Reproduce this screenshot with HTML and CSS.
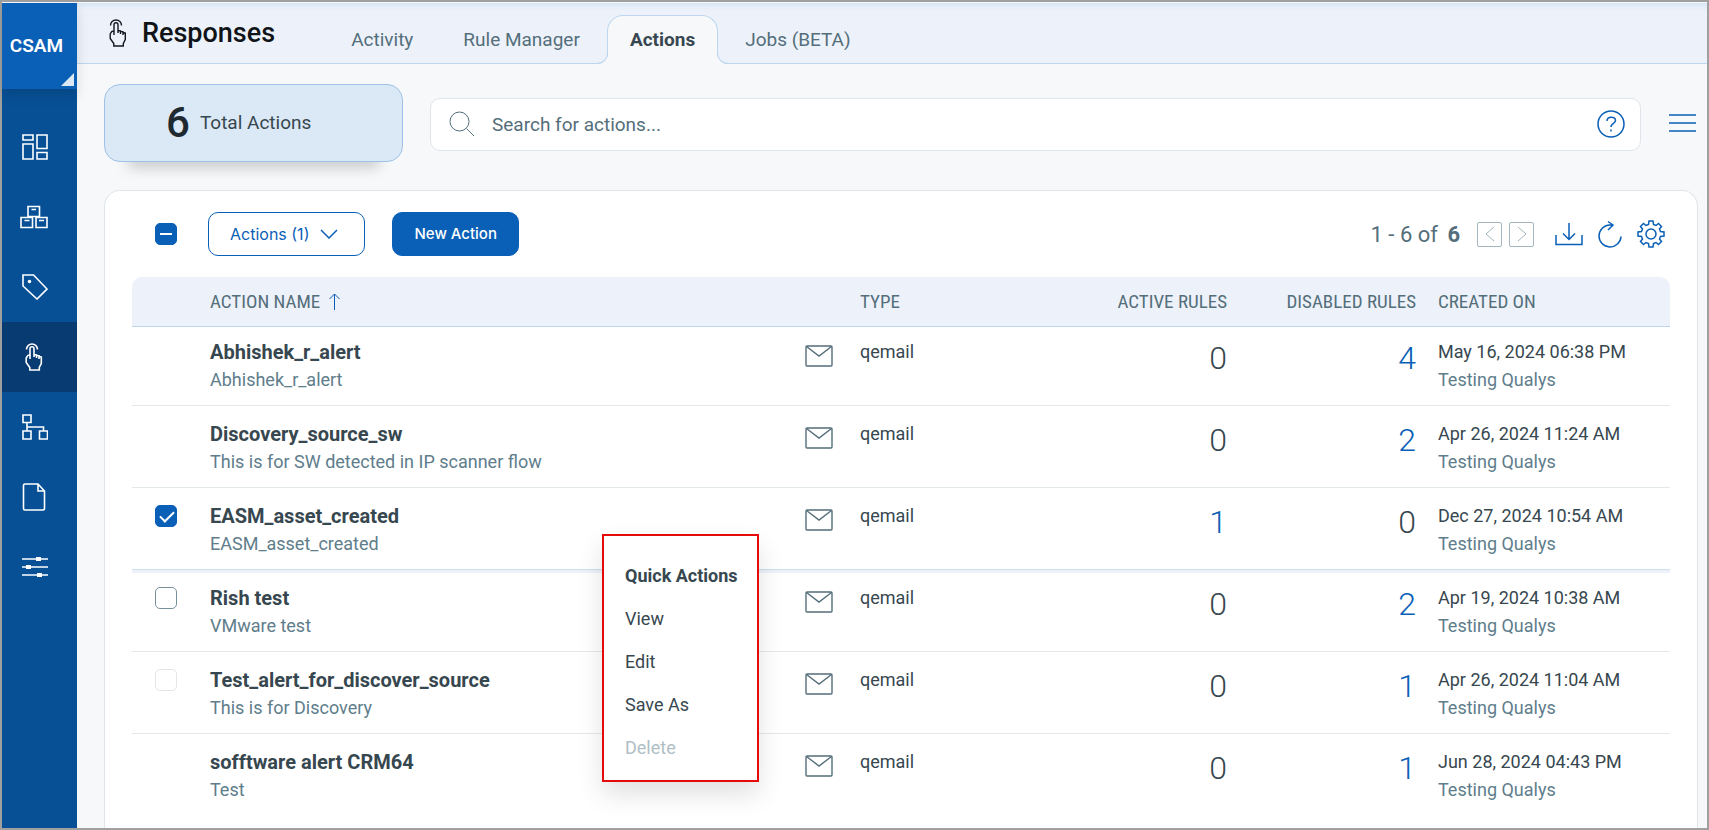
FILE: index.html
```html
<!DOCTYPE html>
<html lang="en">
<head>
    <meta charset="UTF-8">
    <meta name="viewport" content="width=device-width, initial-scale=1.0">
    <title>Responses - Actions</title>
    <link rel="stylesheet" href="styles.css">
</head>
<body>
    <!-- shared icons -->
    <svg width="0" height="0" class="sprite" aria-hidden="true">
        <symbol id="icon-hand" viewBox="0 0 20 30">
            <path d="M6 17V6.800a2 2 0 0 1 4 0V15V12.500l2.500.4V16v-2.800l2.500.5V17v-2.600l2.300.6v6.500l-2 4V28H5.800v-2.500L2.200 20.500v-4.500l1.500-2.400L6 12.800"/>
            <path d="M2.500 7.500a5.500 5.500 0 0 1 11 0"/>
        </symbol>
        <symbol id="icon-mail" viewBox="0 0 28 22">
            <rect x="1" y="1" width="26" height="20" rx="1"/>
            <path d="M1.500 1.500L14 11L26.500 1.500"/>
        </symbol>
    </svg>

    <div class="app">
        <aside class="sidebar">
            <button class="app-switch" type="button">CSAM</button>
            <nav class="side-nav">
                <a href="#" class="side-link" aria-label="Dashboard">
                    <svg width="26" height="26" viewBox="0 0 26 26"><path d="M1 1h10v5H1zM1 10h10v15H1zM15 1h10v13.500H15zM15 18.500h10V25H15z"/></svg>
                </a>
                <a href="#" class="side-link wide" aria-label="Inventory">
                    <svg width="28" height="24" viewBox="0 0 28 24"><path d="M8 1.500h11.500v10H8zM1 12.500h11.500v10H1zM16 12.500h11v10H16zM11.500 4.500h4.500M4.500 15.500h5M19 15.500h5"/></svg>
                </a>
                <a href="#" class="side-link" aria-label="Tags">
                    <svg width="26" height="26" viewBox="0 0 26 26"><path d="M1 1h10.500L25 15L15 25L1 12z"/><circle cx="7.500" cy="7.500" r="1" fill="#fff"/></svg>
                </a>
                <a href="#" class="side-link active" aria-label="Responses">
                    <svg width="20" height="30"><use href="#icon-hand"/></svg>
                </a>
                <a href="#" class="side-link" aria-label="Network">
                    <svg width="26" height="26" viewBox="0 0 26 26"><path d="M1 1h8v7.500H1zM1 17h8v8H1zM17.500 17h8v8h-8zM5 8.500V17M5 13h16.500v4"/></svg>
                </a>
                <a href="#" class="side-link" aria-label="Reports">
                    <svg width="24" height="28" viewBox="0 0 24 28"><path d="M3 1h13l6.500 7v17.500a1.500 1.500 0 0 1-1.500 1.500H3a1.500 1.500 0 0 1-1.500-1.500v-23A1.500 1.500 0 0 1 3 1zM16 1v7h6.500"/></svg>
                </a>
                <a href="#" class="side-link" aria-label="Configuration">
                    <svg width="26" height="22" viewBox="0 0 26 22"><path d="M0 3h26M0 11h26M0 19h26"/><path class="solid" d="M14 1h5v4h-5zM4 9h5v4H4zM15 17h5v4h-5z"/></svg>
                </a>
            </nav>
        </aside>

        <main class="main">
            <header class="topbar">
                <svg class="title-icon" width="20" height="30"><use href="#icon-hand"/></svg>
                <h1>Responses</h1>
                <nav class="tabs">
                    <a href="#" class="tab">Activity</a>
                    <a href="#" class="tab">Rule Manager</a>
                    <a href="#" class="tab active">Actions</a>
                    <a href="#" class="tab">Jobs (BETA)</a>
                </nav>
            </header>

            <section class="summary">
                <div class="total">
                    <strong>6</strong>
                    <span>Total Actions</span>
                </div>
                <div class="search">
                    <svg width="26" height="26" viewBox="0 0 26 26"><circle cx="10.500" cy="10.500" r="9.500"/><path d="M17.500 17.500L25 25"/></svg>
                    <input type="text" aria-label="Search for actions" placeholder="Search for actions...">
                    <button class="icon-btn" type="button" aria-label="Help">
                        <svg width="28" height="28" viewBox="0 0 28 28"><circle cx="14" cy="14" r="13"/><path d="M10 11c0-5 8.500-5 8.500-.5c0 3-4.500 3-4.500 6.500M14 19.500v2"/></svg>
                    </button>
                </div>
                <button class="icon-btn" type="button" aria-label="Menu">
                    <svg width="27" height="20" viewBox="0 0 27 20"><path d="M0 2h27M0 10h27M0 18h27"/></svg>
                </button>
            </section>

            <section class="card">
                <div class="toolbar">
                    <input type="checkbox" class="check partial" aria-label="Select all">
                    <button class="btn btn-outline" type="button">Actions (1)
                        <svg width="18" height="10" viewBox="0 0 18 10"><path d="M1 1l8 8l8-8"/></svg>
                    </button>
                    <button class="btn btn-primary" type="button">New Action</button>
                    <div class="range">1 - 6 of <b>6</b></div>
                    <div class="pager">
                        <button class="page-btn" type="button" aria-label="Previous page"><svg width="10" height="16" viewBox="0 0 10 16"><path d="M9 1L1 8l8 7"/></svg></button>
                        <button class="page-btn" type="button" aria-label="Next page"><svg width="10" height="16" viewBox="0 0 10 16"><path d="M1 1l8 7l-8 7"/></svg></button>
                    </div>
                    <div class="tools">
                        <button class="icon-btn" type="button" aria-label="Download">
                            <svg width="28" height="28" viewBox="0 0 28 28"><path d="M1 15v9.500h26V15M14 3v16M8 13.500l6 6l6-6"/></svg>
                        </button>
                        <button class="icon-btn" type="button" aria-label="Refresh">
                            <svg width="24" height="28" viewBox="0 0 24 28"><path d="M14.500 5H12a11 11 0 1 0 11 11.500M10 1.500l5 3.500l-5 5"/></svg>
                        </button>
                        <button class="icon-btn" type="button" aria-label="Settings">
                            <svg width="28" height="28" viewBox="0 0 28 28"><circle cx="14" cy="14" r="5"/><path d="M11.500 4.500L12 1h4l.5 3.500l2.500 1L21.500 3.500L24.500 6.500L22.500 9l1 2.500L27 12v4l-3.500.5l-1 2.500l2 2.500l-3 3l-2.500-2l-2.500 1L16 27h-4l-.5-3.500l-2.500-1L6.500 24.500L3.500 21.500L5.500 19l-1-2.500L1 16v-4l3.500-.5l1-2.500L3.500 6.500L6.500 3.500L9 5.500z"/></svg>
                        </button>
                    </div>
                </div>

                <table class="grid">
                    <colgroup>
                        <col class="col-check">
                        <col>
                        <col class="col-icon">
                        <col class="col-type">
                        <col class="col-active">
                        <col class="col-disabled">
                        <col class="col-created">
                    </colgroup>
                    <thead>
                        <tr>
                            <th></th>
                            <th>ACTION NAME <svg class="sort" width="11" height="17" viewBox="0 0 11 17"><path d="M5.500 17V1M.5 6l5-5l5 5"/></svg></th>
                            <th></th>
                            <th>TYPE</th>
                            <th class="num">ACTIVE RULES</th>
                            <th class="num">DISABLED RULES</th>
                            <th class="created">CREATED ON</th>
                        </tr>
                    </thead>
                    <tbody>
                        <tr>
                            <td></td>
                            <td><div class="name">Abhishek_r_alert</div><div class="sub">Abhishek_r_alert</div></td>
                            <td><svg class="mail" width="28" height="22"><use href="#icon-mail"/></svg></td>
                            <td>qemail</td>
                            <td class="num">0</td>
                            <td class="num"><a href="#">4</a></td>
                            <td class="created">May 16, 2024 06:38 PM<div class="sub">Testing Qualys</div></td>
                        </tr>
                        <tr>
                            <td></td>
                            <td><div class="name">Discovery_source_sw</div><div class="sub">This is for SW detected in IP scanner flow</div></td>
                            <td><svg class="mail" width="28" height="22"><use href="#icon-mail"/></svg></td>
                            <td>qemail</td>
                            <td class="num">0</td>
                            <td class="num"><a href="#">2</a></td>
                            <td class="created">Apr 26, 2024 11:24 AM<div class="sub">Testing Qualys</div></td>
                        </tr>
                        <tr class="selected">
                            <td><input type="checkbox" class="check" aria-label="Select EASM_asset_created" checked></td>
                            <td class="has-menu">
                                <div class="name">EASM_asset_created</div><div class="sub">EASM_asset_created</div>
                                <div class="quick-menu">
                                    <h2>Quick Actions</h2>
                                    <button type="button">View</button>
                                    <button type="button">Edit</button>
                                    <button type="button">Save As</button>
                                    <button type="button" disabled>Delete</button>
                                </div>
                            </td>
                            <td><svg class="mail" width="28" height="22"><use href="#icon-mail"/></svg></td>
                            <td>qemail</td>
                            <td class="num"><a href="#">1</a></td>
                            <td class="num">0</td>
                            <td class="created">Dec 27, 2024 10:54 AM<div class="sub">Testing Qualys</div></td>
                        </tr>
                        <tr>
                            <td><input type="checkbox" class="check" aria-label="Select Rish test"></td>
                            <td><div class="name">Rish test</div><div class="sub">VMware test</div></td>
                            <td><svg class="mail" width="28" height="22"><use href="#icon-mail"/></svg></td>
                            <td>qemail</td>
                            <td class="num">0</td>
                            <td class="num"><a href="#">2</a></td>
                            <td class="created">Apr 19, 2024 10:38 AM<div class="sub">Testing Qualys</div></td>
                        </tr>
                        <tr>
                            <td><input type="checkbox" class="check faded" aria-label="Select Test_alert_for_discover_source"></td>
                            <td><div class="name">Test_alert_for_discover_source</div><div class="sub">This is for Discovery</div></td>
                            <td><svg class="mail" width="28" height="22"><use href="#icon-mail"/></svg></td>
                            <td>qemail</td>
                            <td class="num">0</td>
                            <td class="num"><a href="#">1</a></td>
                            <td class="created">Apr 26, 2024 11:04 AM<div class="sub">Testing Qualys</div></td>
                        </tr>
                        <tr>
                            <td></td>
                            <td><div class="name">sofftware alert CRM64</div><div class="sub">Test</div></td>
                            <td><svg class="mail" width="28" height="22"><use href="#icon-mail"/></svg></td>
                            <td>qemail</td>
                            <td class="num">0</td>
                            <td class="num"><a href="#">1</a></td>
                            <td class="created">Jun 28, 2024 04:43 PM<div class="sub">Testing Qualys</div></td>
                        </tr>
                    </tbody>
                </table>
            </section>
        </main>
    </div>
</body>
</html>
```
FILE: styles.css
```css
* {
    box-sizing: border-box;
}
body {
    margin: 0;
    font-family: Roboto, "Liberation Sans", sans-serif;
    font-size: 18px;
    line-height: 28px;
    color: #37474f;
    background-color: #f7f8fa;
}
button, input {
    font: inherit;
}
button {
    padding: 0;
    border: 0;
    background: none;
    cursor: pointer;
}
a {
    color: #0a5fb6;
    text-decoration: none;
}
svg {
    display: block;
    fill: none;
    stroke: currentColor;
}
.sprite {
    position: absolute;
}
.app {
    display: flex;
    min-height: 100vh;
    border: 2px solid #a0a0a0;
    padding-top: 1px;
}

/* sidebar */
.sidebar {
    flex: none;
    width: 75px;
    background-color: #075095;
    color: #fff;
}
.app-switch {
    position: relative;
    width: 100%;
    height: 86px;
    padding-right: 6px;
    background-color: #0a5fb6;
    color: #fff;
    font-weight: 600;
    font-size: 19px;
    box-shadow: 0 6px 12px rgba(0, 0, 0, 0.12);
}
.app-switch::after {
    content: "";
    position: absolute;
    right: 3px;
    bottom: 3px;
    width: 13px;
    height: 13px;
    background-color: #dbe7f5;
    clip-path: polygon(100% 0, 100% 100%, 0 100%);
}
.side-nav {
    margin-top: 23px;
}
.side-link {
    display: flex;
    align-items: center;
    height: 70px;
    padding-left: 20px;
    color: #fff;
}
.side-link svg {
    stroke-width: 1.6;
}
.side-link.wide {
    padding-left: 18px;
}
.side-link.active {
    background-color: #083b72;
    padding-left: 22px;
}
.side-link .solid {
    fill: #fff;
    stroke: none;
}

/* header */
.main {
    flex: 1;
    min-width: 0;
    display: flex;
    flex-direction: column;
}
.topbar {
    display: flex;
    height: 61px;
    padding-left: 31px;
    background-color: #edf2fa;
    border-bottom: 1px solid #bdd6ee;
    box-shadow: inset 0 7px 6px -4px #d6e5f3;
}
.title-icon {
    margin-top: 15px;
    color: #101820;
    stroke-width: 1.4;
}
h1 {
    margin: 14px 0 0 14px;
    font-size: 27px;
    line-height: 32px;
    font-weight: 500;
    color: #101418;
}
.tabs {
    display: flex;
    align-items: flex-end;
    gap: 4px;
    margin: 0 0 -1px 53px;
}
.tab {
    height: 49px;
    padding: 0 22px;
    border: 1px solid transparent;
    font-size: 19px;
    line-height: 48px;
    color: #546e7a;
}
.tab.active {
    position: relative;
    border-color: #bdd6ee;
    border-bottom: 0;
    border-radius: 16px 16px 0 0;
    background-color: #f7f8fa;
    color: #37474f;
    font-weight: 700;
}
.tab.active::before,
.tab.active::after {
    content: "";
    position: absolute;
    bottom: 0;
    width: 12px;
    height: 12px;
    border-bottom: 1px solid #bdd6ee;
}
.tab.active::before {
    right: 100%;
    border-right: 1px solid #bdd6ee;
    border-bottom-right-radius: 11px;
    box-shadow: 4px 4px 0 #f7f8fa;
    clip-path: inset(0 -1px 0 0);
}
.tab.active::after {
    left: 100%;
    border-left: 1px solid #bdd6ee;
    border-bottom-left-radius: 11px;
    box-shadow: -4px 4px 0 #f7f8fa;
    clip-path: inset(0 0 0 -1px);
}

/* summary row */
.summary {
    display: flex;
    align-items: center;
    padding: 20px 11px 28px 27px;
}
.total {
    flex: none;
    display: flex;
    align-items: center;
    gap: 10px;
    width: 299px;
    height: 78px;
    padding-left: 61px;
    border: 1px solid #9fc1e6;
    border-radius: 16px;
    background-color: #dbe8f5;
    box-shadow: 0 30px 14px -24px rgba(0, 0, 0, 0.18);
    font-size: 19px;
}
.total strong {
    font-size: 42px;
    font-weight: 500;
    color: #1f2a30;
}
.search {
    flex: 1;
    display: flex;
    align-items: center;
    gap: 17px;
    height: 53px;
    margin: 2px 28px 0 27px;
    padding: 0 15px 0 18px;
    border: 1px solid #dfe5ea;
    border-radius: 10px;
    background-color: #fff;
    color: #546e7a;
}
.search input {
    flex: 1;
    min-width: 0;
    padding: 1px 0 0;
    border: 0;
    outline: 0;
    background: none;
    font-size: 19px;
}
.search input::placeholder {
    color: #546e7a;
    opacity: 1;
}
.icon-btn {
    color: #0a5fb6;
}
.icon-btn svg {
    stroke-width: 1.5;
}

/* card */
.card {
    flex: 1;
    margin: 0 9px 0 27px;
    padding: 21px 27px 0;
    border: 1px solid #dfe5ea;
    border-bottom: 0;
    border-radius: 16px 16px 0 0;
    background-color: #fff;
}
.toolbar {
    display: flex;
    align-items: center;
    height: 44px;
    padding: 0 5px 0 23px;
}
.check {
    appearance: none;
    display: block;
    width: 22px;
    height: 22px;
    margin: 0;
    border: 1px solid #78909c;
    border-radius: 5px;
    background: #fff center no-repeat;
}
.check.faded {
    border-color: #e2e6e9;
}
.check.partial,
.check:checked {
    border-color: #0a5fb6;
    background-color: #0a5fb6;
}
.check.partial {
    background-image: linear-gradient(#fff, #fff);
    background-size: 12px 2px;
}
.check:checked::before {
    content: "";
    display: block;
    width: 12px;
    height: 6px;
    margin: 5px 4px;
    border: solid #fff;
    border-width: 0 0 2px 2px;
    transform: rotate(-45deg);
}
.btn {
    height: 44px;
    border: 1px solid #0a5fb6;
    border-radius: 10px;
    font-family: Inter, Roboto, sans-serif;
    font-size: 15px;
}
.btn-outline {
    display: flex;
    align-items: center;
    gap: 11px;
    margin: 0 27px 0 31px;
    padding: 0 26px 0 21px;
    color: #0a5fb6;
    font-size: 16px;
}
.btn-outline svg {
    stroke-width: 1.5;
}
.btn-primary {
    padding: 0 21px;
    background-color: #0a5fb6;
    color: #fff;
    font-weight: 500;
}
.range {
    margin-left: auto;
    padding-top: 2px;
    font-size: 22px;
    color: #546e7a;
}
.range b {
    margin-left: 4px;
}
.pager {
    display: flex;
    gap: 7px;
    margin: 0 21px 0 17px;
}
.page-btn {
    display: flex;
    align-items: center;
    justify-content: center;
    width: 25px;
    height: 25px;
    border: 1px solid #a3b5be;
    border-radius: 2px;
    color: #a3b5be;
}
.tools {
    display: flex;
    gap: 15px;
}

/* table */
.grid {
    width: 100%;
    margin-top: 21px;
    table-layout: fixed;
    border-collapse: separate;
    border-spacing: 0;
}
.col-check {
    width: 78px;
}
.col-icon {
    width: 55px;
}
.col-type {
    width: 178px;
}
.col-active,
.col-disabled {
    width: 189px;
}
.col-created {
    width: 254px;
}
th {
    height: 50px;
    padding: 0;
    border-bottom: 1px solid #bdd6ee;
    background-color: #edf2fa;
    font-family: "Roboto Condensed", Roboto, sans-serif;
    font-size: 19px;
    font-weight: 400;
    text-align: left;
    color: #546e7a;
}
th:first-child {
    border-top-left-radius: 10px;
}
th:last-child {
    border-top-right-radius: 10px;
}
.sort {
    display: inline-block;
    margin-left: 4px;
    vertical-align: -2px;
    color: #0a5fb6;
}
td {
    height: 82px;
    padding: 14px 0 0;
    border-bottom: 1px solid #e3e8eb;
    vertical-align: top;
}
tbody tr:first-child td {
    height: 79px;
    padding-top: 11px;
}
tbody tr:last-child td {
    border-bottom: 0;
}
.selected td {
    border-bottom-color: #cfdfec;
    box-shadow: 0 3px 0 #edf2fa;
}
td .check {
    margin: 3px 0 0 23px;
}
.name {
    font-size: 20px;
    font-weight: 700;
}
.sub {
    font-size: 18px;
    color: #607d8b;
}
.mail {
    margin-top: 7px;
    color: #546e7a;
    stroke-width: 1.4;
}
th.num {
    text-align: right;
}
td.num {
    font-size: 32px;
    font-weight: 300;
    line-height: 40px;
    text-align: right;
}
.created {
    padding-left: 22px;
}

/* quick actions menu */
.has-menu {
    position: relative;
}
.quick-menu {
    position: absolute;
    z-index: 2;
    top: 46px;
    left: 392px;
    display: flex;
    flex-direction: column;
    align-items: flex-start;
    gap: 15px;
    padding: 26px 19px 18px 21px;
    border: 2px solid #e60a0a;
    background-color: #fff;
    box-shadow: 0 12px 24px rgba(0, 0, 0, 0.12);
}
.quick-menu h2 {
    margin: 0;
    font-size: 18px;
    line-height: 28px;
    font-weight: 700;
    white-space: nowrap;
}
.quick-menu button {
    color: #37474f;
}
.quick-menu button:disabled {
    color: #b0bec5;
}
```
